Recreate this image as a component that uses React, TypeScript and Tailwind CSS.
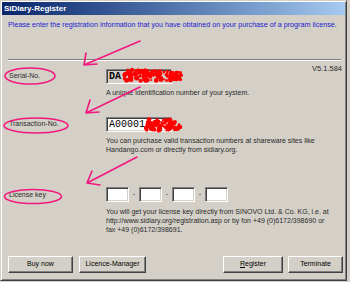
import React from "react";

const PINK = "#f2187e";

// red smudges that hide the codes
function smudge(x0: number, y0: number, w: number, h: number, seed: number, n: number) {
  let s = seed;
  const rnd = () => {
    s = (s * 9301 + 49297) % 233280;
    return s / 233280;
  };
  const out = [];
  for (let i = 0; i < n; i++) {
    const x = x0 + rnd() * w;
    const y = y0 + rnd() * h;
    const r = 0.9 + rnd() * 1.5;
    out.push(<circle key={`${seed}-${i}`} cx={x} cy={y} r={r} fill="#ff0000" />);
  }
  return out;
}

const sunken =
  "border border-t-[#808080] border-l-[#808080] border-r-white border-b-white shadow-[inset_1px_1px_0_#404040,inset_-1px_-1px_0_#d4d0c8]";

const button =
  "h-[17px] flex items-center justify-center bg-[#d4d0c8] border border-t-white border-l-white border-r-[#404040] border-b-[#404040] shadow-[inset_-1px_-1px_0_#808080] text-[7px] text-black";

export default function App() {
  return (
    <div className="relative w-[350px] h-[282px] bg-[#d4d0c8] overflow-hidden font-['Liberation_Sans',Arial,sans-serif] text-[#2a2a2a]">
      <div className="w-[347px] h-[281px] flex flex-col p-px border border-t-[#d4d0c8] border-l-[#d4d0c8] border-r-[#404040] border-b-[#404040] shadow-[inset_1px_1px_0_#fff,inset_-1px_-1px_0_#808080]">
        <div className="h-[13px] flex items-center pl-[2px] bg-gradient-to-r from-[#0a246a] to-[#a6caf0]">
          <span className="text-[8px] font-bold text-white leading-none">SiDiary-Register</span>
        </div>

        <p className="mt-[5px] pl-[6px] text-[7.2px] leading-[10px] text-[#2020d0] whitespace-nowrap">
          Please enter the registration information that you have obtained on your purchase of a program license.
        </p>

        <div className="mt-[29px] ml-[6px] mr-[4px] border-t border-t-[#808080] border-b border-b-white" />

        {/* serial */}
        <div className="flex items-start mt-[2px]">
          <div className="w-[104px] pl-[7px] mt-[8px] text-[7px] leading-[10px]">Serial-No.</div>
          <div className="flex flex-col">
            <div className={`mt-[6px] w-[66px] h-[15px] bg-[#d4d0c8] flex items-center pl-[2px] ${sunken}`}>
              <span className="font-['Liberation_Mono',monospace] font-bold text-[10px] text-black leading-none">DA</span>
            </div>
            <div className="mt-[4px] text-[7px] leading-[9px] whitespace-nowrap">
              A unique identification number of your system.
            </div>
          </div>
          <div className="ml-auto mr-[3px] mt-[1px] text-[7.5px] leading-[10px]">V5.1.584</div>
        </div>

        {/* transaction */}
        <div className="flex items-start mt-[20px]">
          <div className="w-[104px] pl-[7px] mt-[2px] text-[7px] leading-[10px]">Transaction-No.</div>
          <div className="flex flex-col">
            <div className={`w-[66px] h-[15px] bg-white flex items-center pl-[2px] ${sunken}`}>
              <span className="font-['Liberation_Mono',monospace] text-[10px] text-black leading-none">A00001</span>
            </div>
            <div className="mt-[4px] text-[7px] leading-[9px] whitespace-nowrap">
              You can purchase valid transaction numbers at shareware sites like
              <br />
              Handango.com or directly from sidiary.org.
            </div>
          </div>
        </div>

        {/* license key */}
        <div className="flex items-start mt-[33px]">
          <div className="w-[104px] pl-[7px] mt-[3px] text-[7px] leading-[10px]">License key</div>
          <div className="flex flex-col">
            <div className="flex items-center gap-[3px]">
              {[0, 1, 2, 3].map((i) => (
                <React.Fragment key={i}>
                  {i > 0 && <span className="text-[7px] w-[4px] text-center">-</span>}
                  <div className={`w-[23px] h-[15px] bg-white ${sunken}`} />
                </React.Fragment>
              ))}
            </div>
            <div className="mt-[5px] text-[7px] leading-[9px] whitespace-nowrap">
              You will get your license key directly from SINOVO Ltd. &amp; Co. KG, i.e. at
              <br />
              http://www.sidiary.org/registration.asp or by fon +49 (0)6172/398690 or
              <br />
              fax +49 (0)6172/398691.
            </div>
          </div>
        </div>

        <div className="mt-auto mb-[6px] flex pl-[6px] pr-[2px]">
          <button className={`${button} w-[65px]`}>Buy now</button>
          <button className={`${button} w-[67px] ml-[6px]`}>Licence-Manager</button>
          <button className={`${button} w-[60px] ml-auto`}>
            <span><span className="underline">R</span>egister</span>
          </button>
          <button className={`${button} w-[55px] ml-[5px]`}>Terminate</button>
        </div>
      </div>

      {/* hand-drawn annotations over the dialog */}
      <svg className="absolute inset-0 pointer-events-none" width="350" height="282" viewBox="0 0 350 282">
        {smudge(124, 70, 48, 11, 7, 140)}
        {smudge(170, 72, 12, 8, 13, 30)}
        {smudge(146, 119, 26, 12, 21, 80)}
        {smudge(170, 121, 11, 9, 5, 25)}
        <g fill="none" stroke={PINK} strokeWidth="1.6" strokeLinecap="round" strokeLinejoin="round">
          <ellipse cx="30" cy="76" rx="25" ry="8" />
          <ellipse cx="36" cy="125.5" rx="32" ry="7.5" />
          <ellipse cx="33" cy="196.5" rx="28.5" ry="7" />
          <path d="M140 41 L84 65 M84 65 L86 53 M84 65 L97 64" />
          <path d="M140 87 L86 113 M86 113 L90 100 M86 113 L99 112" />
          <path d="M137 157 L87 183 M87 183 L92 171 M87 183 L100 185" />
        </g>
      </svg>
    </div>
  );
}
